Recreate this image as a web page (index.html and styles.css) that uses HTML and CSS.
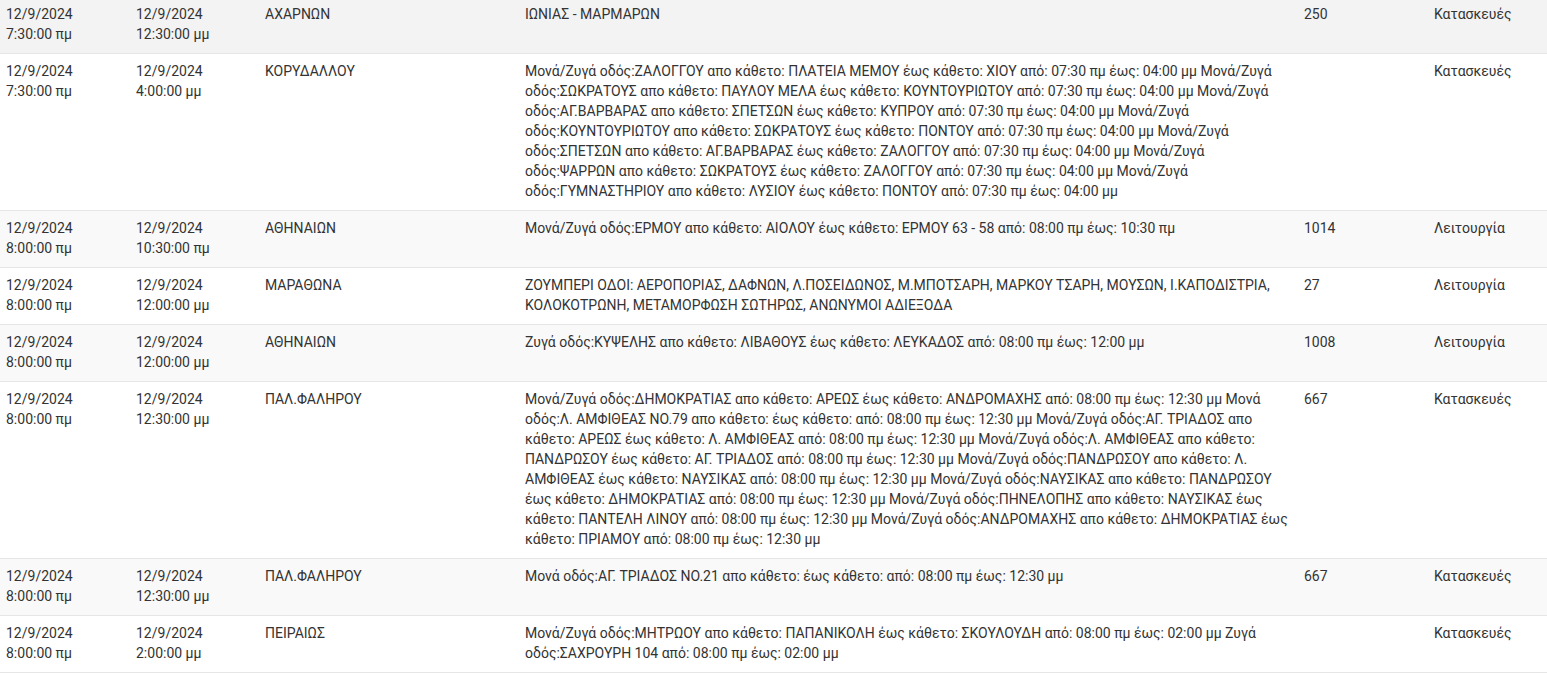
FILE: index.html
```html
<!doctype html>
<html lang="el">
  <head>
    <meta charset="UTF-8" />
    <meta name="viewport" content="width=device-width, initial-scale=1.0" />
    <title>Διακοπές νερού</title>
    <link rel="stylesheet" href="styles.css">
  </head>
  <body>
    <div class="table-wrap">
      <table class="outages">
        <colgroup>
          <col class="c-start" />
          <col class="c-end" />
          <col class="c-area" />
          <col class="c-desc" />
          <col class="c-num" />
          <col class="c-type" />
        </colgroup>
        <tbody>
          <tr class="hover">
            <td>12/9/2024<br />7:30:00 πμ</td>
            <td>12/9/2024<br />12:30:00 μμ</td>
            <td>ΑΧΑΡΝΩΝ</td>
            <td>ΙΩΝΙΑΣ - ΜΑΡΜΑΡΩΝ</td>
            <td>250</td>
            <td>Κατασκευές</td>
          </tr>
          <tr>
            <td>12/9/2024<br />7:30:00 πμ</td>
            <td>12/9/2024<br />4:00:00 μμ</td>
            <td>ΚΟΡΥΔΑΛΛΟΥ</td>
            <td>Μονά/Ζυγά οδός:ΖΑΛΟΓΓΟΥ απο κάθετο: ΠΛΑΤΕΙΑ ΜΕΜΟΥ έως κάθετο: ΧΙΟΥ από: 07:30 πμ έως: 04:00 μμ Μονά/Ζυγά οδός:ΣΩΚΡΑΤΟΥΣ απο κάθετο: ΠΑΥΛΟΥ ΜΕΛΑ έως κάθετο: ΚΟΥΝΤΟΥΡΙΩΤΟΥ από: 07:30 πμ έως: 04:00 μμ Μονά/Ζυγά οδός:ΑΓ.ΒΑΡΒΑΡΑΣ απο κάθετο: ΣΠΕΤΣΩΝ έως κάθετο: ΚΥΠΡΟΥ από: 07:30 πμ έως: 04:00 μμ Μονά/Ζυγά οδός:ΚΟΥΝΤΟΥΡΙΩΤΟΥ απο κάθετο: ΣΩΚΡΑΤΟΥΣ έως κάθετο: ΠΟΝΤΟΥ από: 07:30 πμ έως: 04:00 μμ Μονά/Ζυγά οδός:ΣΠΕΤΣΩΝ απο κάθετο: ΑΓ.ΒΑΡΒΑΡΑΣ έως κάθετο: ΖΑΛΟΓΓΟΥ από: 07:30 πμ έως: 04:00 μμ Μονά/Ζυγά οδός:ΨΑΡΡΩΝ απο κάθετο: ΣΩΚΡΑΤΟΥΣ έως κάθετο: ΖΑΛΟΓΓΟΥ από: 07:30 πμ έως: 04:00 μμ Μονά/Ζυγά οδός:ΓΥΜΝΑΣΤΗΡΙΟΥ απο κάθετο: ΛΥΣΙΟΥ έως κάθετο: ΠΟΝΤΟΥ από: 07:30 πμ έως: 04:00 μμ</td>
            <td></td>
            <td>Κατασκευές</td>
          </tr>
          <tr>
            <td>12/9/2024<br />8:00:00 πμ</td>
            <td>12/9/2024<br />10:30:00 πμ</td>
            <td>ΑΘΗΝΑΙΩΝ</td>
            <td>Μονά/Ζυγά οδός:ΕΡΜΟΥ απο κάθετο: ΑΙΟΛΟΥ έως κάθετο: ΕΡΜΟΥ 63 - 58 από: 08:00 πμ έως: 10:30 πμ</td>
            <td>1014</td>
            <td>Λειτουργία</td>
          </tr>
          <tr>
            <td>12/9/2024<br />8:00:00 πμ</td>
            <td>12/9/2024<br />12:00:00 μμ</td>
            <td>ΜΑΡΑΘΩΝΑ</td>
            <td>ΖΟΥΜΠΕΡΙ ΟΔΟΙ: ΑΕΡΟΠΟΡΙΑΣ, ΔΑΦΝΩΝ, Λ.ΠΟΣΕΙΔΩΝΟΣ, Μ.ΜΠΟΤΣΑΡΗ, ΜΑΡΚΟΥ ΤΣΑΡΗ, ΜΟΥΣΩΝ, Ι.ΚΑΠΟΔΙΣΤΡΙΑ, ΚΟΛΟΚΟΤΡΩΝΗ, ΜΕΤΑΜΟΡΦΩΣΗ ΣΩΤΗΡΩΣ, ΑΝΩΝΥΜΟΙ ΑΔΙΕΞΟΔΑ</td>
            <td>27</td>
            <td>Λειτουργία</td>
          </tr>
          <tr>
            <td>12/9/2024<br />8:00:00 πμ</td>
            <td>12/9/2024<br />12:00:00 μμ</td>
            <td>ΑΘΗΝΑΙΩΝ</td>
            <td>Ζυγά οδός:ΚΥΨΕΛΗΣ απο κάθετο: ΛΙΒΑΘΟΥΣ έως κάθετο: ΛΕΥΚΑΔΟΣ από: 08:00 πμ έως: 12:00 μμ</td>
            <td>1008</td>
            <td>Λειτουργία</td>
          </tr>
          <tr>
            <td>12/9/2024<br />8:00:00 πμ</td>
            <td>12/9/2024<br />12:30:00 μμ</td>
            <td>ΠΑΛ.ΦΑΛΗΡΟΥ</td>
            <td>Μονά/Ζυγά οδός:ΔΗΜΟΚΡΑΤΙΑΣ απο κάθετο: ΑΡΕΩΣ έως κάθετο: ΑΝΔΡΟΜΑΧΗΣ από: 08:00 πμ έως: 12:30 μμ Μονά οδός:Λ. ΑΜΦΙΘΕΑΣ ΝΟ.79 απο κάθετο: έως κάθετο: από: 08:00 πμ έως: 12:30 μμ Μονά/Ζυγά οδός:ΑΓ. ΤΡΙΑΔΟΣ απο κάθετο: ΑΡΕΩΣ έως κάθετο: Λ. ΑΜΦΙΘΕΑΣ από: 08:00 πμ έως: 12:30 μμ Μονά/Ζυγά οδός:Λ. ΑΜΦΙΘΕΑΣ απο κάθετο: ΠΑΝΔΡΩΣΟΥ έως κάθετο: ΑΓ. ΤΡΙΑΔΟΣ από: 08:00 πμ έως: 12:30 μμ Μονά/Ζυγά οδός:ΠΑΝΔΡΩΣΟΥ απο κάθετο: Λ. ΑΜΦΙΘΕΑΣ έως κάθετο: ΝΑΥΣΙΚΑΣ από: 08:00 πμ έως: 12:30 μμ Μονά/Ζυγά οδός:ΝΑΥΣΙΚΑΣ απο κάθετο: ΠΑΝΔΡΩΣΟΥ έως κάθετο: ΔΗΜΟΚΡΑΤΙΑΣ από: 08:00 πμ έως: 12:30 μμ Μονά/Ζυγά οδός:ΠΗΝΕΛΟΠΗΣ απο κάθετο: ΝΑΥΣΙΚΑΣ έως κάθετο: ΠΑΝΤΕΛΗ ΛΙΝΟΥ από: 08:00 πμ έως: 12:30 μμ Μονά/Ζυγά οδός:ΑΝΔΡΟΜΑΧΗΣ απο κάθετο: ΔΗΜΟΚΡΑΤΙΑΣ έως κάθετο: ΠΡΙΑΜΟΥ από: 08:00 πμ έως: 12:30 μμ</td>
            <td>667</td>
            <td>Κατασκευές</td>
          </tr>
          <tr>
            <td>12/9/2024<br />8:00:00 πμ</td>
            <td>12/9/2024<br />12:30:00 μμ</td>
            <td>ΠΑΛ.ΦΑΛΗΡΟΥ</td>
            <td>Μονά οδός:ΑΓ. ΤΡΙΑΔΟΣ ΝΟ.21 απο κάθετο: έως κάθετο: από: 08:00 πμ έως: 12:30 μμ</td>
            <td>667</td>
            <td>Κατασκευές</td>
          </tr>
          <tr>
            <td>12/9/2024<br />8:00:00 πμ</td>
            <td>12/9/2024<br />2:00:00 μμ</td>
            <td>ΠΕΙΡΑΙΩΣ</td>
            <td>Μονά/Ζυγά οδός:ΜΗΤΡΩΟΥ απο κάθετο: ΠΑΠΑΝΙΚΟΛΗ έως κάθετο: ΣΚΟΥΛΟΥΔΗ από: 08:00 πμ έως: 02:00 μμ Ζυγά οδός:ΣΑΧΡΟΥΡΗ 104 από: 08:00 πμ έως: 02:00 μμ</td>
            <td></td>
            <td>Κατασκευές</td>
          </tr>
        </tbody>
      </table>
    </div>
  </body>
</html>
```

FILE: styles.css
```css
body {
  margin: 0;
  background-color: #fff;
  font-family: Roboto, "Noto Sans", Arial, sans-serif;
  font-size: 14px;
  line-height: 20px;
  color: #333;
  overflow: hidden;
}
.table-wrap {
  margin-top: -3px;
}
.outages {
  width: 100%;
  table-layout: fixed;
  border-collapse: collapse;
}
.c-start {
  width: 130px;
}
.c-end {
  width: 129px;
}
.c-area {
  width: 260px;
}
.c-desc {
  width: 779px;
}
.c-num {
  width: 130px;
}
.outages td {
  padding: 7px 6px 9px;
  vertical-align: top;
  text-align: left;
  border-bottom: 1px solid #e6e6e6;
}
.outages tr:nth-child(odd) {
  background-color: #f9f9f9;
}
.outages tr:nth-child(even) {
  background-color: #fff;
}
.outages tr.hover {
  background-color: #f3f3f3;
}
```
